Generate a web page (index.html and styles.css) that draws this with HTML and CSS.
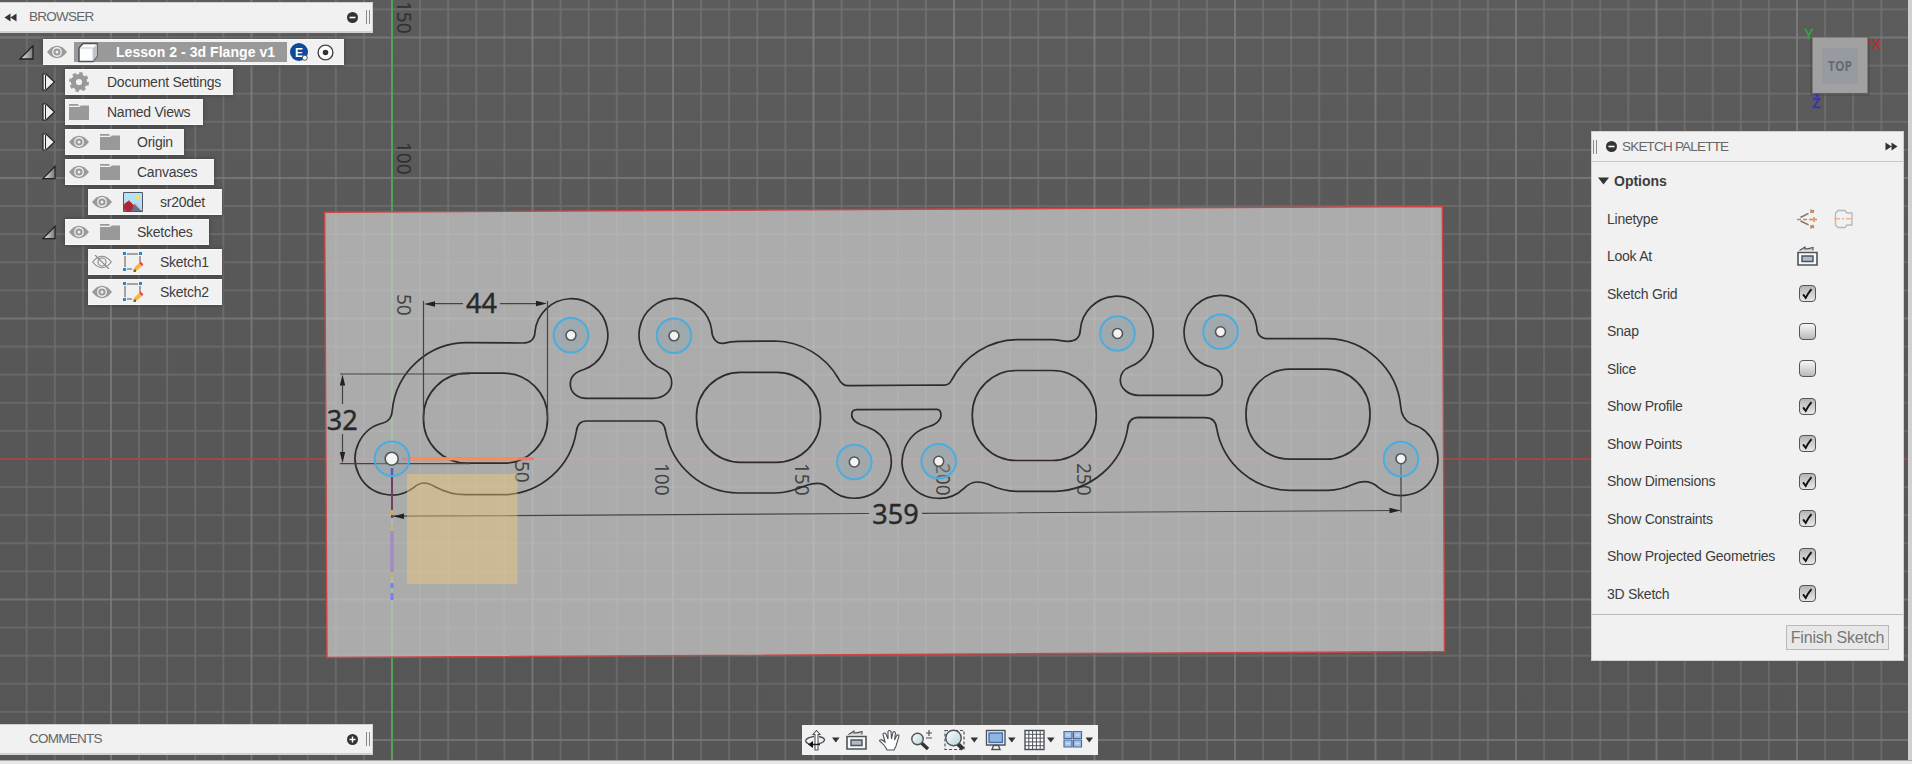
FILE: index.html
```
<!DOCTYPE html>
<html lang="en">
<head>
<meta charset="utf-8">
<title>Lesson 2 - 3d Flange</title>
<link rel="stylesheet" href="styles.css">
</head>
<body>
<svg class="viewport" width="1912" height="764" viewBox="0 0 1912 764">
  <defs>
    <linearGradient id="floor" x1="0" y1="0" x2="0" y2="1"><stop offset="0" stop-color="#5b5c5b"/><stop offset=".5" stop-color="#575757"/><stop offset="1" stop-color="#565656"/></linearGradient>
    <pattern id="minor" width="28.1" height="28.1" patternUnits="userSpaceOnUse" x="391" y="458"><path class="grid-minor" d="M1 0V28.1M0 1H28.1"/></pattern>
    <pattern id="major" width="140.5" height="140.5" patternUnits="userSpaceOnUse" x="391" y="458"><path class="grid-major" d="M1 0V140.5M0 1H140.5"/></pattern>
  </defs>
  <rect width="1912" height="764" fill="url(#floor)"/>
  <rect width="1912" height="764" fill="url(#minor)"/>
  <rect width="1912" height="764" fill="url(#major)"/>
  <path class="axis-y" d="M392 0V764"/>
  <path class="axis-x" d="M0 459H1912"/>
  <path class="sheet" d="M324.7 212.3L1442.3 206.5L1444.5 651.5L327 657.5Z"/>
  <g class="ruler">
    <text transform="translate(397 1) rotate(90)">150</text>
    <text transform="translate(397 142) rotate(90)">100</text>
    <text transform="translate(397 294) rotate(90)">50</text>
    <text transform="translate(514.500 461) rotate(90)">50</text>
    <text transform="translate(655 463) rotate(90)">100</text>
    <text transform="translate(795 463) rotate(90)">150</text>
    <text transform="translate(936 463) rotate(90)">200</text>
    <text transform="translate(1076.500 463) rotate(90)">250</text>
  </g>
  <path class="flange" d="M383 423Q392 420.500 392.300 410A75 75 0 0 1 466.700 342.700L521.700 343Q534.500 343.500 535 331.700A36.500 36.500 0 1 1 583.300 369.700C575 372 570.300 377 570.300 384.300C570.300 393 578 398.300 586.700 398.300H653.300C664 398.300 671.700 391 671.700 382.700C671.700 376 669 372 663.300 369.300A36.500 36.500 0 1 1 711.700 330C711.700 337 715.500 343.800 723.300 343.300Q731 341.500 738.300 341.300L775 341A75 75 0 0 1 838.300 378.300Q842 385.700 848.300 385.700L943.300 385Q949 385.500 951.700 380A75 75 0 0 1 1016.700 339.700H1051.700C1060 339.700 1062 341.500 1068.300 341.300Q1079.800 341.300 1080.300 330A36.500 36.500 0 1 1 1130 366.700C1124 369 1120.300 374 1120.300 380C1120.300 389 1129 395.300 1138.300 395.300H1205C1215 395.300 1222.300 389 1222.300 381.700C1222.300 374 1218 369 1211.700 367.300A36.500 36.500 0 1 1 1256.700 326.700Q1257 338.700 1268.300 338.700H1326.700A75 75 0 0 1 1400.700 406.700Q1401.500 419 1411.700 424A36.500 36.500 0 1 1 1378.300 487.300Q1372 481.700 1364 481.700Q1359 481.700 1353.300 484.300Q1340 490.300 1328.300 490.300H1290A75 75 0 0 1 1216.700 428.300Q1215.500 417.700 1205 417.700L1138.300 417.300Q1128.500 417.700 1127.700 428.300A75 75 0 0 1 1055 491.300H1016.700Q1003 491.300 988.300 484.300Q982 482 976.700 482Q970.500 482 964 488.300A36.600 36.600 0 1 1 928.300 426.700C935 425 941 420.500 941 415Q941 409.300 936.700 409.300L856.700 409.700Q851.700 409.700 851.700 415C851.700 421.500 859 424.500 866.700 426.700A36.800 36.800 0 1 1 829.300 488.300Q824 483.300 817.300 483.300Q812 483.300 806.700 485.300Q789 493 775 493H738.300A75 75 0 0 1 665.700 431.700Q664.500 421 655 421H586.700Q577.500 421 576.300 431.700A75 75 0 0 1 505 494.700H465Q450 494.700 435 486.700Q429 483 424 483Q419 483 414 487.300A36.500 36.500 0 1 1 383 423Z"/>
  <g class="flange">
    <rect x="423.500" y="373.200" width="124" height="90" rx="44"/>
    <rect x="696.500" y="372.300" width="124" height="90" rx="44"/>
    <rect x="972.300" y="370.500" width="124" height="90" rx="44"/>
    <rect x="1246" y="369.200" width="124" height="90" rx="44"/>
  </g>
  <path class="dim" d="M423.500 301V420M547.500 301V420M430 303.700H463M500 303.700H540M340 374H470M340 463.700H470M342.500 380V404M342.500 434V459M392 516.200L869 513.500M922 513.300L1400 510.500M1401 459V512.500"/>
  <path class="arrow" d="M424 304l11-2.700v5.400zM547 303.500l-11-2.700v5.400zM342.500 374.500l-2.700 11h5.400zM342.500 463l-2.700-11h5.400zM393 516.200l11-2.700v5.400zM1400.500 510.500l-11-2.700v5.400z"/>
  <g class="dim-text"><text x="481.500" y="312.500">44</text><text x="342.300" y="430">32</text><text x="895.500" y="524">359</text></g>
  <rect class="plane" x="407" y="474" width="110.500" height="110"/>
  <path d="M402 458.700H534" stroke="#f87373" stroke-width="3"/>
  <path d="M409 458.700H518" stroke="#fb8d55" stroke-width="3"/>
  <path d="M392 468V518" stroke="#70405f" stroke-width="2"/><path d="M392 468V475" stroke="#2b2bc8" stroke-width="2.500"/>
  <path d="M392 531V572" stroke="#a08cc4" stroke-width="3.500"/><path d="M392 510V515M392 526V530M392 573V577" stroke="#cbb050" stroke-width="2.500"/>
  <path d="M392 583V588M392 593V600" stroke="#7b7bff" stroke-width="3"/>
  <g class="hole">
    <circle cx="392" cy="458.700" r="17.300"/><circle cx="571" cy="335.300" r="17.300"/><circle cx="674" cy="335.800" r="17.300"/><circle cx="854.300" cy="462" r="17.300"/><circle cx="938.700" cy="461.300" r="17.300"/><circle cx="1117.500" cy="333.500" r="17.300"/><circle cx="1220.500" cy="331.800" r="17.300"/><circle cx="1401" cy="459" r="17.300"/>
  </g>
  <g class="point">
    <circle cx="391.700" cy="458.700" r="6.500"/><circle cx="571" cy="335.300" r="5"/><circle cx="674" cy="335.800" r="5"/><circle cx="854.300" cy="462" r="5"/><circle cx="938.700" cy="461.300" r="5"/><circle cx="1117.500" cy="333.500" r="5"/><circle cx="1220.500" cy="331.800" r="5"/><circle cx="1401" cy="458.700" r="5"/>
  </g>
  <g class="cube">
    <rect class="cube-shadow" x="1810" y="36" width="60" height="60"/>
    <rect x="1812.500" y="37.500" width="55" height="55.500" fill="#a1a1a1"/>
    <rect x="1822" y="48" width="36" height="36" fill="#979aa0"/>
    <text class="cube-top" x="1840" y="71" textLength="24" lengthAdjust="spacingAndGlyphs">TOP</text>
    <text x="1804.500" y="39" fill="#37a33c" stroke="#37a33c">Y</text><text x="1872" y="48.500" fill="#b52f2f" stroke="#b52f2f">X</text><path d="M1868 43h3" stroke="#b52f2f" stroke-width="2"/><path d="M1817 97v-3" stroke="#3434b0" stroke-width="3"/><text x="1812" y="108" fill="#3434b0" stroke="#3434b0">Z</text>
  </g>
</svg>

<svg class="defs" width="0" height="0">
  <symbol id="eye" viewBox="0 0 20 14"><path d="M0 7Q10-5.500 20 7Q10 19.500 0 7Z" fill="#999"/><circle cx="10" cy="7" r="4.900" fill="#f1f1f1"/><circle cx="10" cy="7" r="3.600" fill="#999"/><circle cx="10" cy="7" r="1.500" fill="#f1f1f1"/></symbol>
  <symbol id="eye-off" viewBox="0 0 20 14"><g fill="none" stroke="#888" stroke-width="1.100"><path d="M.7 7Q10-4.500 19.300 7Q10 18.500 .7 7Z"/><circle cx="10" cy="7" r="4"/><path d="M3 0L17 14"/></g></symbol>
  <symbol id="folder" viewBox="0 0 20 16"><path d="M0 0H9L10 1.700H0ZM0 3H10L12 1.500H20V16H0Z" fill="#999"/></symbol>
  <symbol id="sketch" viewBox="0 0 20 20"><path d="M4 2H15M2 4V15M17 4V10M4 17H9" stroke="#555" fill="none"/><path d="M0 0h3v3H0zM16 0h3v3h-3zM0 16h3v3H0z" fill="#1f86dc"/><path d="M11 16L16 11L19 14L14 18.500L10.500 19.500Z" fill="#f6b544"/><path d="M16 11l1.500-1.500 3 3L19 14z" fill="#ed3b4e"/><path d="M10.500 17.500h2.500v2.500h-2.500z" fill="#666"/></symbol>
  <symbol id="closed" viewBox="0 0 14 18"><path d="M1 1H4L12.500 9L4 17H1Z" fill="#eee" stroke="#222" stroke-width="1.200"/><path d="M3.500 2V16" stroke="#222"/></symbol>
  <symbol id="open" viewBox="0 0 15 15"><path d="M14 .8V14H1Z" fill="url(#tri)" stroke="#222" stroke-width="1.300"/></symbol>
  <linearGradient id="tri"><stop offset="0" stop-color="#eee"/><stop offset="1" stop-color="#777"/></linearGradient>
  <linearGradient id="lens" x1="0" y1="0" x2="1" y2="1"><stop offset="0" stop-color="#fff"/><stop offset="1" stop-color="#b5d3d7"/></linearGradient>
  <symbol id="lookat" viewBox="0 0 22 20"><path d="M1 6.500H20V19H1Z" fill="#f8f8f8" stroke="#4d535b" stroke-width="1.600"/><path d="M5 10H16V15.500H5Z" fill="#b3bac7" stroke="#4d535b" stroke-width="1.400"/><path d="M2.500 4.500L8 1V3Q11 3 16 1.500V4.500" fill="#ccc" stroke="#4d535b" stroke-width="1.100"/></symbol>
  <symbol id="tick" viewBox="0 0 17 17"><path d="M3.500 9.500L6.500 13.500Q9.500 7.500 13 3.500" fill="none" stroke="#111" stroke-width="2.200"/></symbol>
  <symbol id="drop" viewBox="0 0 8 6"><path d="M0 .5H7.600L3.800 5.500Z" fill="#333"/></symbol>
</svg>

<aside class="browser">
  <header class="bar"><svg width="13" height="9" viewBox="0 0 13 9"><path d="M6.500 .5V8.500L.5 4.500ZM12.500 .5V8.500L6.500 4.500Z" fill="#333"/></svg><span class="bar-title">BROWSER</span><svg class="round" width="11" height="11" viewBox="0 0 11 11"><circle cx="5.500" cy="5.500" r="5.500" fill="#333"/><path d="M2.500 5.500h6" stroke="#fff" stroke-width="1.600"/></svg><i class="grip"></i></header>
  <ul class="tree">
    <li class="row root"><svg width="15" height="15"><use href="#open"/></svg><div class="label"><svg width="20" height="14"><use href="#eye"/></svg><span class="selected"><svg width="22" height="21" viewBox="0 0 22 21"><path d="M2 6L6 1.500H20V14L16 19.500H2Z" fill="#fdfdfd" stroke="#4d535e" stroke-width="1.500"/><path d="M16 19V6L20 2V14Z" fill="#bfc3ca"/><path d="M3 6H16V19" fill="none" stroke="#c4c7cd"/></svg><b>Lesson 2 - 3d Flange v1</b></span><svg width="19" height="19" viewBox="0 0 19 19"><circle cx="9" cy="9" r="9" fill="#0b4a9c"/><text class="badge-e" x="9" y="13.500">E</text><circle cx="14.800" cy="14.800" r="2.500" fill="#fff" stroke="#555"/></svg><svg class="target" width="17" height="17" viewBox="0 0 17 17"><circle cx="8.500" cy="8.500" r="7.400" fill="#fff" stroke="#444" stroke-width="1.400"/><circle cx="8.500" cy="8.500" r="2.800" fill="#333"/></svg></div></li>
    <li class="row l1"><svg width="14" height="18"><use href="#closed"/></svg><div class="label" style="width:168px"><svg width="20" height="20" viewBox="0 0 20 20"><circle cx="10" cy="10" r="5.600" fill="none" stroke="#999" stroke-width="5"/><circle cx="10" cy="10" r="8.500" fill="none" stroke="#999" stroke-width="3" stroke-dasharray="3.400 3.276"/></svg><span class="far">Document Settings</span></div></li>
    <li class="row l1"><svg width="14" height="18"><use href="#closed"/></svg><div class="label" style="width:138px"><svg width="20" height="16"><use href="#folder"/></svg><span class="far">Named Views</span></div></li>
    <li class="row l1"><svg width="14" height="18"><use href="#closed"/></svg><div class="label" style="width:119px"><svg width="20" height="14"><use href="#eye"/></svg><svg class="second" width="20" height="16"><use href="#folder"/></svg><span class="far">Origin</span></div></li>
    <li class="row l1"><svg width="14" height="15"><use href="#open"/></svg><div class="label" style="width:149px"><svg width="20" height="14"><use href="#eye"/></svg><svg class="second" width="20" height="16"><use href="#folder"/></svg><span class="far">Canvases</span></div></li>
    <li class="row l2"><div class="label" style="width:134px"><svg width="20" height="14"><use href="#eye"/></svg><svg class="second" width="20" height="20" viewBox="0 0 20 20"><path d="M.5.500h19v19H.5z" fill="#b8e0f3" stroke="#4d5665"/><circle cx="14.500" cy="5.500" r="2.200" fill="#f5dc74"/><path d="M1 13L6 8L10 13L13 11L19 17V19H1Z" fill="#687586"/><path d="M12 11L19 18" stroke="#ccd" stroke-width="2"/><circle cx="5.500" cy="14.500" r="4" fill="#873846" stroke="#d3152a" stroke-width="1.500"/><path d="M3 17L8 12" stroke="#d3152a" stroke-width="1.400"/></svg><span class="far">sr20det</span></div></li>
    <li class="row l1"><svg width="14" height="15"><use href="#open"/></svg><div class="label" style="width:144px"><svg width="20" height="14"><use href="#eye"/></svg><svg class="second" width="20" height="16"><use href="#folder"/></svg><span class="far">Sketches</span></div></li>
    <li class="row l2"><div class="label" style="width:134px"><svg width="20" height="14"><use href="#eye-off"/></svg><svg class="second" width="20" height="20"><use href="#sketch"/></svg><span class="far">Sketch1</span></div></li>
    <li class="row l2"><div class="label" style="width:134px"><svg width="20" height="14"><use href="#eye"/></svg><svg class="second" width="20" height="20"><use href="#sketch"/></svg><span class="far">Sketch2</span></div></li>
  </ul>
</aside>

<section class="palette">
  <header><i class="grip"></i><svg class="round" width="11" height="11" viewBox="0 0 11 11"><circle cx="5.500" cy="5.500" r="5.500" fill="#333"/><path d="M2.500 5.500h6" stroke="#fff" stroke-width="1.600"/></svg><span>SKETCH PALETTE</span><svg class="fast" width="13" height="9" viewBox="0 0 13 9"><path d="M.5 .5V8.500L6.500 4.500ZM6.500 .5V8.500L12.500 4.500Z" fill="#333"/></svg></header>
  <h2><svg width="11" height="8" viewBox="0 0 11 8"><path d="M0 .5H11L5.500 7.500Z" fill="#333"/></svg>Options</h2>
  <div class="opt"><span>Linetype</span><svg width="21" height="20" viewBox="0 0 21 20"><path d="M3.500 8.500L17 1.500M3.500 12L17 18.500" stroke="#777" stroke-width="1.500" stroke-dasharray="9 2"/><path d="M0 10.500H20" stroke="#e8803c" stroke-width="1.500" stroke-dasharray="4 2"/><path d="M13.500 .5L16.500 4M17 8V13M13.500 19.500L16.500 16" stroke="#e8803c" stroke-width="1.500"/></svg><svg class="second-type" width="20" height="20" viewBox="0 0 20 20"><path d="M1.500 8V4L4 1.500H11L13 4H18V8M1.500 8V16L4 18.500H11L13 16H18V8" fill="none" stroke="#b8b8b8" stroke-width="1.300"/><path d="M0 9.800H20" stroke="#efb693" stroke-width="1.400" stroke-dasharray="6 2 2 2"/></svg></div>
  <div class="opt"><span>Look At</span><svg width="22" height="20"><use href="#lookat"/></svg></div>
  <div class="opt"><span>Sketch Grid</span><i class="check on"><svg width="15" height="15"><use href="#tick"/></svg></i></div>
  <div class="opt"><span>Snap</span><i class="check"></i></div>
  <div class="opt"><span>Slice</span><i class="check"></i></div>
  <div class="opt"><span>Show Profile</span><i class="check on"><svg width="15" height="15"><use href="#tick"/></svg></i></div>
  <div class="opt"><span>Show Points</span><i class="check on"><svg width="15" height="15"><use href="#tick"/></svg></i></div>
  <div class="opt"><span>Show Dimensions</span><i class="check on"><svg width="15" height="15"><use href="#tick"/></svg></i></div>
  <div class="opt"><span>Show Constraints</span><i class="check on"><svg width="15" height="15"><use href="#tick"/></svg></i></div>
  <div class="opt"><span>Show Projected Geometries</span><i class="check on"><svg width="15" height="15"><use href="#tick"/></svg></i></div>
  <div class="opt"><span>3D Sketch</span><i class="check on"><svg width="15" height="15"><use href="#tick"/></svg></i></div>
  <footer><button>Finish Sketch</button></footer>
</section>

<header class="bar comments"><span class="bar-title">COMMENTS</span><svg class="round" width="11" height="11" viewBox="0 0 11 11"><circle cx="5.500" cy="5.500" r="5.500" fill="#333"/><path d="M2.500 5.500h6M5.500 2.500v6" stroke="#fff" stroke-width="1.400"/></svg><i class="grip"></i></header>

<nav class="tools">
  <svg width="296" height="30" viewBox="0 0 296 30">
    <g fill="none" stroke="#4d535b" stroke-width="1.400">
      <path d="M12 11.500C2 13 2 17 7 19M17 11.500C25 13 25 18 12 19.500"/><path d="M13 25V9.500H11L14.500 5.500L18 9.500H16V25Z" fill="#fff" stroke-width="1.100"/><path d="M10 19.500H18" stroke="#222"/><path d="M11 16V23L6 19.500Z" fill="#111" stroke="none"/>
      <path d="M84 23C82 19 78 17 77.500 15.500Q79 13.500 83 17L81 9Q82.500 7 84 9L86 14L86 6.500Q87.500 4.500 89 6.500L89.500 14L91 7Q92.500 6 93.500 8L92.500 15L95 10Q97 9.500 97 11L94 21L92 25H85Z" fill="#fff" stroke-width="1.100"/>
      <path d="M119.500 18L126 24" stroke="#333" stroke-width="3.500"/><circle cx="115.500" cy="14" r="5.700" fill="url(#lens)"/><path d="M124 8h6M127 5v6M124 13h6" stroke-width="1.200"/>
      <path d="M143 5.500H162V24.500H143Z" stroke-dasharray="3 2" stroke-width="1.200"/><path d="M155 18L161 24" stroke="#333" stroke-width="4"/><circle cx="151.500" cy="13" r="7.700" fill="url(#lens)"/>
      <path d="M184.500 5.500H203V20H184.500Z" fill="#fff"/><path d="M187 8H200.500V17.500H187Z" fill="#92b4e3" stroke="#4670a5"/><path d="M190 24.500L191.500 20.500H196.500L198 24.500Z" fill="#fff"/>
      <path d="M223 5.500H242V24.500H223Z" fill="#fff"/><path d="M226.800 6V24M230.600 6V24M234.400 6V24M238.200 6V24M223 9.300H242M223 13.100H242M223 16.900H242M223 20.700H242" stroke-width="1"/>
      <path d="M262 6.500H270V13.500H262ZM271.500 6.500H279.500V13.500H271.500ZM262 15H270V22H262ZM271.500 15H279.500V22H271.500Z" fill="#a3c2ea" stroke="#4b6a96" stroke-width="1.200"/><path d="M264 10H268M273.500 10H277.500M264 18.500H268M273.500 18.500H277.500" stroke="#c8dcf5"/>
    </g>
    <use href="#lookat" x="44" y="5" width="22" height="20"/>
    <g><use href="#drop" x="30" y="12" width="8" height="6"/><use href="#drop" x="168.500" y="12" width="8" height="6"/><use href="#drop" x="206" y="12" width="8" height="6"/><use href="#drop" x="245" y="12" width="8" height="6"/><use href="#drop" x="283.500" y="12" width="8" height="6"/></g>
  </svg>
</nav>
<i class="edge-right"></i><i class="edge-bottom"></i>
</body>
</html>
```
FILE: styles.css
```
* { box-sizing: border-box; }
body { margin: 0; width: 1912px; height: 764px; overflow: hidden; position: relative; background: #595959; color: #3d3d3d; font: 14px/18px "Liberation Sans", Arial, sans-serif; letter-spacing: -.25px; }
svg { flex: none; letter-spacing: 0; }
.viewport { display: block; position: absolute; left: 0; top: 0; }
.defs { position: absolute; }
.grid-minor { stroke: #fff; stroke-opacity: .13; stroke-width: 1.600; fill: none; }
.grid-major { stroke: #fff; stroke-opacity: .09; stroke-width: 1.600; fill: none; }
.axis-y { stroke: #56a058; stroke-width: 2; }
.axis-x { stroke: #9b4a4a; stroke-width: 2; }
.sheet { fill: #c9c9c9; fill-opacity: .74; stroke: #cf4545; stroke-width: 1.400; }
.ruler { font: 19px "Noto Sans", sans-serif; fill: #222; fill-opacity: .75; }
.flange { fill: none; stroke: #2c2c2c; stroke-width: 1.700; }
.dim { fill: none; stroke: #444; stroke-width: 1.200; }
.arrow { fill: #222; }
.dim-text { font: 27px "Noto Sans", sans-serif; fill: #292929; text-anchor: middle; stroke: #292929; stroke-width: .4; }
.plane { fill: #f7cb75; fill-opacity: .42; }
.hole { fill: #8fa5b0; fill-opacity: .4; stroke: #4badde; stroke-width: 2; }
.point { fill: #f3f3f3; stroke: #555; stroke-width: 1.600; }
.cube { font: 15px "Noto Sans", sans-serif; stroke-width: .5; }
.cube-shadow { fill: #333; fill-opacity: .22; }
.cube-top { font: bold 14px "Open Sans", sans-serif; fill: #666a70; text-anchor: middle; }

.browser { position: absolute; left: 0; top: 2px; width: 373px; }
.bar { display: flex; align-items: center; height: 31px; width: 373px; padding: 0 2px 0 4px; background: #f1f1f1; border: solid #d2d2d2; border-width: 1px 1px 2px 0; color: #666; }
.bar-title { margin-left: 12px; flex: 1; font-size: 13.500px; letter-spacing: -.75px; }
.grip { width: 4px; height: 14px; border: solid #888; border-width: 0 1px; margin-left: 8px; }
.tree { list-style: none; margin: 6px 0 0; padding: 0; display: flex; flex-direction: column; gap: 4px; }
.row { display: flex; align-items: center; height: 26px; }
.root { padding-left: 19px; }
.l1 { padding-left: 42px; }
.l2 { padding-left: 88px; }
.row .label { display: flex; align-items: center; height: 26px; background: #f1f1f1; padding-left: 4px; box-shadow: 0 0 4px rgba(0,0,0,.35); border: 1px solid #fafafa; white-space: nowrap; border-width: 1px 0; }
.root .label { margin-left: 9px; width: 301px; }
.l1 .label { margin-left: 9px; }
.second { margin-left: 11px; }
.far { margin-left: 18px; }
.second + .far { margin-left: 17px; }
.selected { display: flex; align-items: center; width: 213px; height: 20px; margin: 0 3px 0 7px; padding-left: 3px; background: #999; color: #fff; }
.selected b { margin-left: 17px; letter-spacing: .050px; }
.badge-e { font: bold 12px "Liberation Sans", sans-serif; fill: #fff; text-anchor: middle; }
.target { margin-left: 8px; }

.palette { position: absolute; left: 1591px; top: 131px; width: 313px; height: 530px; background: #f1f1f1; border: 1px solid #cfcfcf; display: flex; flex-direction: column; }
.palette header { display: flex; align-items: center; height: 30px; border-bottom: 1px solid #c8c8c8; color: #666; padding: 0 5px 0 1px; }
.palette .grip { margin: 0 9px 0 0; }
.palette header span { margin-left: 5px; flex: 1; font-size: 13.500px; letter-spacing: -.8px; }
.palette h2 { display: flex; align-items: center; gap: 5px; margin: 0; padding-left: 6px; height: 38px; font-size: 14px; letter-spacing: 0; }
.opt { display: flex; align-items: center; height: 37.500px; padding-left: 15px; }
.opt span { width: 190px; white-space: nowrap; }
.second-type { margin-left: 16px; }
.check { display: block; width: 17px; height: 17px; margin-left: 2px; border: 1px solid #555; border-radius: 4px; background: linear-gradient(#f8f8f8, #b9b9b9); }
.check.on { background: linear-gradient(#b5b5b5, #e7e7e7); }
.check svg { display: block; }
.palette footer { display: flex; justify-content: flex-end; align-items: center; margin-top: auto; height: 46px; border-top: 1px solid #bbb; padding-right: 14px; }
.palette button { width: 103px; height: 25px; padding: 0; border: 1px solid #b9b9b9; background: #e8e8e8; color: #777; font: 16px "Liberation Sans", sans-serif; letter-spacing: -.2px; white-space: nowrap; }

.comments { position: absolute; left: 0; top: 724px; }
.comments .bar-title { margin-left: 25px; }
.tools { position: absolute; left: 802px; top: 725px; width: 296px; height: 30px; background: #f1f1f1; }
.tools svg { display: block; }
.edge-right { position: absolute; right: 0; top: 0; width: 4px; height: 764px; background: #d0d0d0; }
.edge-bottom { position: absolute; left: 0; bottom: 0; width: 1912px; height: 4px; background: #e6e6e6; border-top: 1px solid #aaa; }
```
